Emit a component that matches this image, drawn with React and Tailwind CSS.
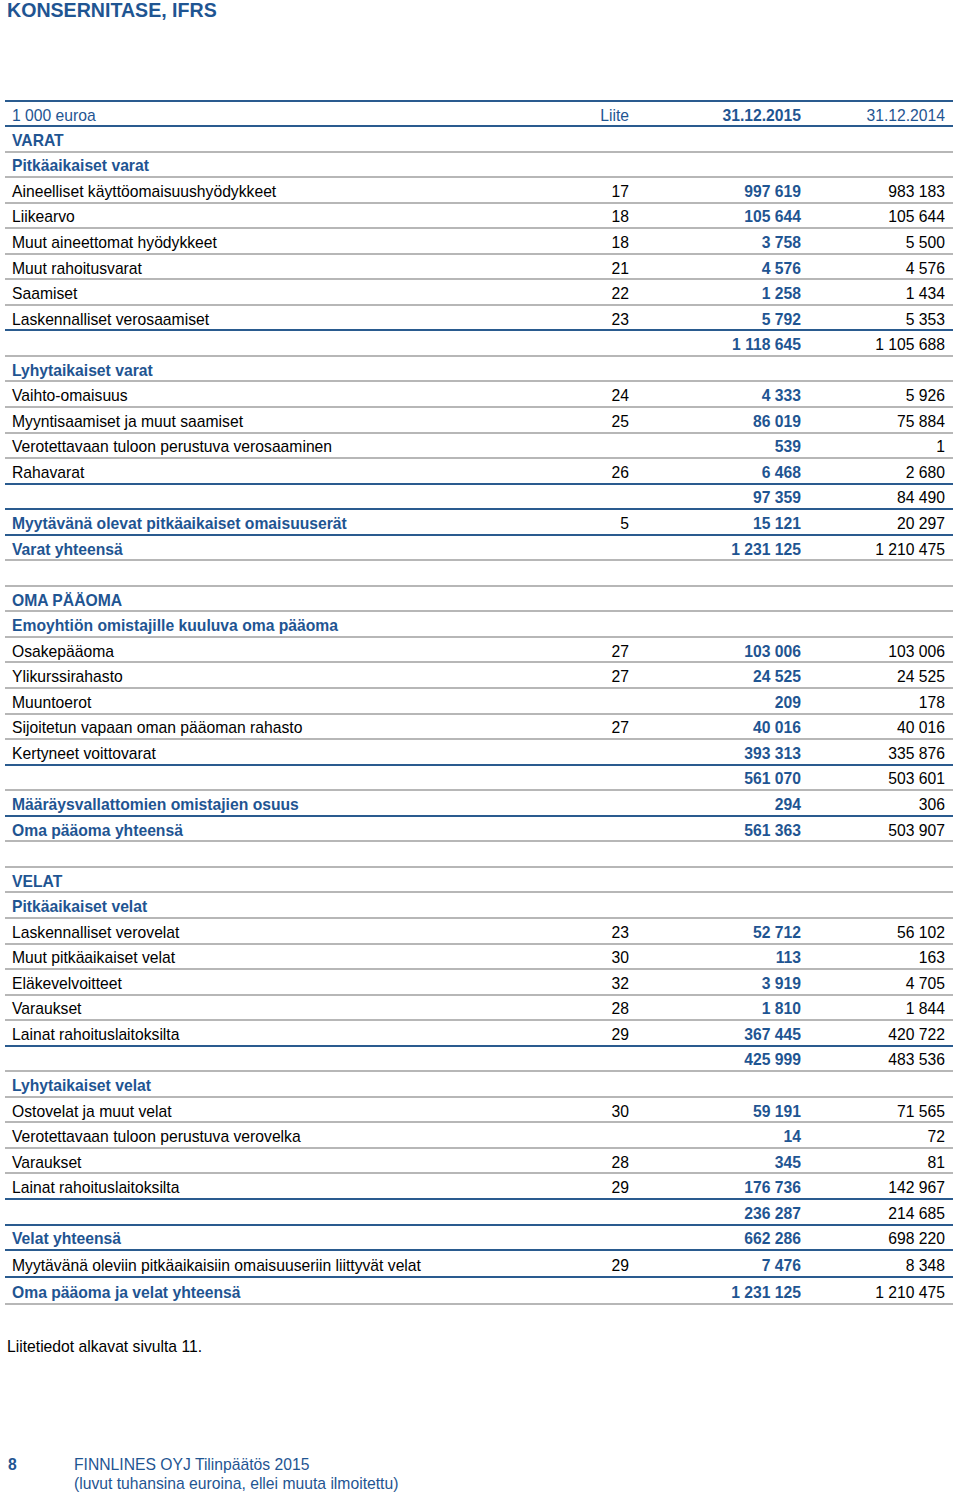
import React from "react";

const rows = [
  { label: "VARAT", kind: "head" },
  { label: "Pitkäaikaiset varat", kind: "head" },
  { label: "Aineelliset käyttöomaisuushyödykkeet", note: "17", a: "997 619", b: "983 183" },
  { label: "Liikearvo", note: "18", a: "105 644", b: "105 644" },
  { label: "Muut aineettomat hyödykkeet", note: "18", a: "3 758", b: "5 500" },
  { label: "Muut rahoitusvarat", note: "21", a: "4 576", b: "4 576" },
  { label: "Saamiset", note: "22", a: "1 258", b: "1 434" },
  { label: "Laskennalliset verosaamiset", note: "23", a: "5 792", b: "5 353", blue: true },
  { label: "", a: "1 118 645", b: "1 105 688" },
  { label: "Lyhytaikaiset varat", kind: "head" },
  { label: "Vaihto-omaisuus", note: "24", a: "4 333", b: "5 926" },
  { label: "Myyntisaamiset ja muut saamiset", note: "25", a: "86 019", b: "75 884" },
  { label: "Verotettavaan tuloon perustuva verosaaminen", a: "539", b: "1" },
  { label: "Rahavarat", note: "26", a: "6 468", b: "2 680", blue: true },
  { label: "", a: "97 359", b: "84 490", blue: true },
  { label: "Myytävänä olevat pitkäaikaiset omaisuuserät", kind: "head", note: "5", a: "15 121", b: "20 297", blue: true },
  { label: "Varat yhteensä", kind: "head", a: "1 231 125", b: "1 210 475" },
  { label: "" },
  { label: "OMA PÄÄOMA", kind: "head" },
  { label: "Emoyhtiön omistajille kuuluva oma pääoma", kind: "head" },
  { label: "Osakepääoma", note: "27", a: "103 006", b: "103 006" },
  { label: "Ylikurssirahasto", note: "27", a: "24 525", b: "24 525" },
  { label: "Muuntoerot", a: "209", b: "178" },
  { label: "Sijoitetun vapaan oman pääoman rahasto", note: "27", a: "40 016", b: "40 016" },
  { label: "Kertyneet voittovarat", a: "393 313", b: "335 876", blue: true },
  { label: "", a: "561 070", b: "503 601" },
  { label: "Määräysvallattomien omistajien osuus", kind: "head", a: "294", b: "306", blue: true },
  { label: "Oma pääoma yhteensä", kind: "head", a: "561 363", b: "503 907" },
  { label: "" },
  { label: "VELAT", kind: "head" },
  { label: "Pitkäaikaiset velat", kind: "head" },
  { label: "Laskennalliset verovelat", note: "23", a: "52 712", b: "56 102" },
  { label: "Muut pitkäaikaiset velat", note: "30", a: "113", b: "163" },
  { label: "Eläkevelvoitteet", note: "32", a: "3 919", b: "4 705" },
  { label: "Varaukset", note: "28", a: "1 810", b: "1 844" },
  { label: "Lainat rahoituslaitoksilta", note: "29", a: "367 445", b: "420 722", blue: true },
  { label: "", a: "425 999", b: "483 536" },
  { label: "Lyhytaikaiset velat", kind: "head" },
  { label: "Ostovelat ja muut velat", note: "30", a: "59 191", b: "71 565" },
  { label: "Verotettavaan tuloon perustuva verovelka", a: "14", b: "72" },
  { label: "Varaukset", note: "28", a: "345", b: "81" },
  { label: "Lainat rahoituslaitoksilta", note: "29", a: "176 736", b: "142 967", blue: true },
  { label: "", a: "236 287", b: "214 685", blue: true },
  { label: "Velat yhteensä", kind: "head", a: "662 286", b: "698 220", blue: true },
  { label: "Myytävänä oleviin pitkäaikaisiin omaisuuseriin liittyvät velat", note: "29", a: "7 476", b: "8 348", blue: true, tall: true },
  { label: "Oma pääoma ja velat yhteensä", kind: "head", a: "1 231 125", b: "1 210 475", tall: true },
];

const Row = ({ row }) => {
  const head = row.kind === "head";
  return (
    <div
      className={`flex items-center border-b-2 pl-[7px] pr-[8px] pt-[4px] ${
        row.tall ? "h-[27px]" : "h-[25.56px]"
      } ${row.blue ? "border-[#2a5b8f]" : "border-[#b7b7b7]"}`}
    >
      <div
        className={`flex-1 whitespace-nowrap ${
          head ? "font-bold text-[#1f5592]" : "text-black"
        }`}
      >
        {row.label}
      </div>
      <div className="w-[60px] text-right text-black">{row.note}</div>
      <div className="w-[172px] text-right font-bold text-[#1f5592]">{row.a}</div>
      <div className="w-[144px] text-right text-black">{row.b}</div>
    </div>
  );
};

export default function App() {
  return (
    <div className="w-[960px] h-[1496px] bg-white font-['Liberation_Sans',Arial,sans-serif] text-[15.7px] leading-[18px]">
      <h1 className="pl-[7px] text-[19.6px] leading-[20px] font-bold text-[#1f5592]">
        KONSERNITASE, IFRS
      </h1>

      <div className="mt-[80px] ml-[5px] w-[948px]">
        <div className="flex items-center h-[27px] border-y-2 border-[#2a5b8f] pl-[7px] pr-[8px] pt-[5px] text-[#1f5592]">
          <div className="flex-1">1 000 euroa</div>
          <div className="w-[60px] text-right">Liite</div>
          <div className="w-[172px] text-right font-bold">31.12.2015</div>
          <div className="w-[144px] text-right">31.12.2014</div>
        </div>
        {rows.map((row, i) => (
          <Row key={i} row={row} />
        ))}
      </div>

      <p className="mt-[33px] pl-[7px] text-black">Liitetiedot alkavat sivulta 11.</p>

      <div className="mt-[99px] flex pl-[8px] text-[#1f5592] leading-[19px]">
        <div className="w-[66px] font-bold">8</div>
        <div>
          <div>FINNLINES OYJ Tilinpäätös 2015</div>
          <div>(luvut tuhansina euroina, ellei muuta ilmoitettu)</div>
        </div>
      </div>
    </div>
  );
}
